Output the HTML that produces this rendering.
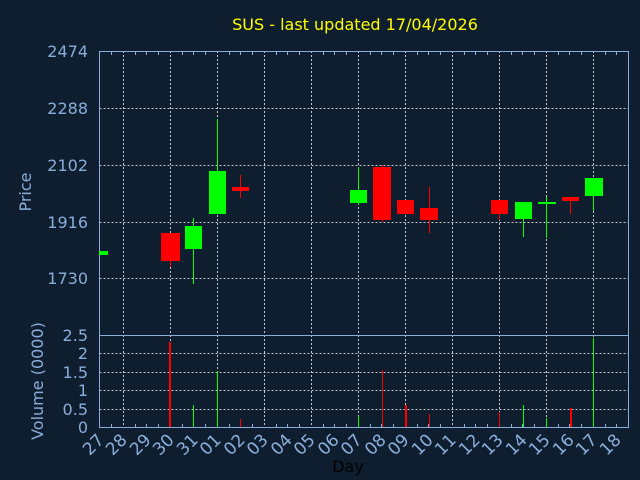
<!DOCTYPE html>
<html><head><style>body{margin:0;background:#0f1e2f}svg{display:block}</style></head><body>
<svg width="640" height="480" xmlns="http://www.w3.org/2000/svg" font-family="DejaVu Sans, Liberation Sans, sans-serif">
<rect width="640" height="480" fill="#0f1e2f"/>
<text x="355" y="30" fill="#ffff00" font-size="16" text-anchor="middle">SUS - last updated 17/04/2026</text>
<g stroke="#c8c8c8" stroke-dasharray="2,2" stroke-width="1">
<path d="M99.5 108.5H628M99.5 165.5H628M99.5 222.5H628M99.5 278.5H628"/>
<path d="M99.5 353.5H628M99.5 372.5H628M99.5 390.5H628M99.5 409.5H628"/>
<path d="M123.5 51V427M170.5 51V427M217.5 51V427M264.5 51V427M311.5 51V427M358.5 51V427M405.5 51V427M452.5 51V427M499.5 51V427M546.5 51V427M593.5 51V427"/>
</g>
<g stroke="#8aaedb" fill="none">
<rect x="99.5" y="51.5" width="529" height="376"/>
<path d="M99.5 335.5H628"/>
<path d="M111.5 52v3M135.5 52v3M146.5 52v3M158.5 52v3M182.5 52v3M193.5 52v3M205.5 52v3M229.5 52v3M240.5 52v3M252.5 52v3M276.5 52v3M287.5 52v3M299.5 52v3M323.5 52v3M334.5 52v3M346.5 52v3M370.5 52v3M381.5 52v3M393.5 52v3M417.5 52v3M428.5 52v3M440.5 52v3M464.5 52v3M475.5 52v3M487.5 52v3M511.5 52v3M522.5 52v3M534.5 52v3M558.5 52v3M569.5 52v3M581.5 52v3M605.5 52v3M616.5 52v3"/>
<path d="M111.5 427v-3M135.5 427v-3M146.5 427v-3M158.5 427v-3M182.5 427v-3M193.5 427v-3M205.5 427v-3M229.5 427v-3M240.5 427v-3M252.5 427v-3M276.5 427v-3M287.5 427v-3M299.5 427v-3M323.5 427v-3M334.5 427v-3M346.5 427v-3M370.5 427v-3M381.5 427v-3M393.5 427v-3M417.5 427v-3M428.5 427v-3M440.5 427v-3M464.5 427v-3M475.5 427v-3M487.5 427v-3M511.5 427v-3M522.5 427v-3M534.5 427v-3M558.5 427v-3M569.5 427v-3M581.5 427v-3M605.5 427v-3M616.5 427v-3"/>
</g>
<g fill="#8aaedb" font-size="16" text-anchor="end">
<text x="88" y="57">2474</text><text x="88" y="114">2288</text><text x="88" y="171">2102</text><text x="88" y="228">1916</text><text x="88" y="284">1730</text>
<text x="88" y="341">2.5</text><text x="88" y="359">2</text><text x="88" y="378">1.5</text><text x="88" y="396">1</text><text x="88" y="415">0.5</text><text x="88" y="433">0</text>
</g>
<text transform="translate(31,192) rotate(-90)" fill="#8aaedb" font-size="16" text-anchor="middle">Price</text>
<text transform="translate(43,381) rotate(-90)" fill="#8aaedb" font-size="16" text-anchor="middle">Volume (0000)</text>
<text x="348" y="472" fill="#000" font-size="16" text-anchor="middle">Day</text>
<g fill="#8aaedb" font-size="17" text-anchor="end">
<text transform="translate(105,441) rotate(-45)">27</text><text transform="translate(128,441) rotate(-45)">28</text><text transform="translate(152,441) rotate(-45)">29</text><text transform="translate(175,441) rotate(-45)">30</text><text transform="translate(199,441) rotate(-45)">31</text><text transform="translate(222,441) rotate(-45)">01</text><text transform="translate(246,441) rotate(-45)">02</text><text transform="translate(269,441) rotate(-45)">03</text><text transform="translate(293,441) rotate(-45)">04</text><text transform="translate(316,441) rotate(-45)">05</text><text transform="translate(340,441) rotate(-45)">06</text><text transform="translate(363,441) rotate(-45)">07</text><text transform="translate(387,441) rotate(-45)">08</text><text transform="translate(410,441) rotate(-45)">09</text><text transform="translate(434,441) rotate(-45)">10</text><text transform="translate(457,441) rotate(-45)">11</text><text transform="translate(481,441) rotate(-45)">12</text><text transform="translate(504,441) rotate(-45)">13</text><text transform="translate(528,441) rotate(-45)">14</text><text transform="translate(551,441) rotate(-45)">15</text><text transform="translate(575,441) rotate(-45)">16</text><text transform="translate(598,441) rotate(-45)">17</text><text transform="translate(622,441) rotate(-45)">18</text>
</g>
<g stroke-width="1">
<path stroke="#ff0000" d="M170.5 261V267M240.5 175V198M382.5 165V222M429.5 187V233M499.5 214V220M570.5 201V214"/>
<path stroke="#00ff00" d="M193.5 218V284M217.5 119V214M358.5 167V205M523.5 219V237M546.5 197V238M593.5 196V211"/>
</g>
<g fill="#ff0000">
<rect x="161" y="233" width="19" height="28"/><rect x="232" y="187" width="17" height="4"/><rect x="373" y="167" width="18" height="53"/><rect x="397" y="200" width="17" height="14"/><rect x="420" y="208" width="18" height="12"/><rect x="491" y="200" width="17" height="14"/><rect x="562" y="197" width="17" height="4"/>
</g>
<g fill="#00ff00">
<rect x="99" y="251" width="9" height="4"/><rect x="185" y="226" width="17" height="23"/><rect x="209" y="171" width="17" height="43"/><rect x="350" y="190" width="17" height="13"/><rect x="515" y="202" width="17" height="17"/><rect x="538" y="202" width="18" height="2"/><rect x="585" y="178" width="18" height="18"/>
</g>
<g fill="#ff0000">
<rect x="169" y="342" width="2" height="85"/><rect x="240" y="419" width="1" height="8"/><rect x="382" y="370" width="1" height="57"/><rect x="405" y="405" width="2" height="22"/><rect x="429" y="414" width="1" height="13"/><rect x="499" y="412" width="1" height="15"/><rect x="570" y="408" width="2" height="19"/>
</g>
<g fill="#00ff00">
<rect x="193" y="405" width="1" height="22"/><rect x="217" y="371" width="1" height="56"/><rect x="358" y="416" width="1" height="11"/><rect x="523" y="405" width="1" height="22"/><rect x="546" y="418" width="1" height="9"/><rect x="593" y="338" width="1" height="89"/>
</g>
</svg>
</body></html>
